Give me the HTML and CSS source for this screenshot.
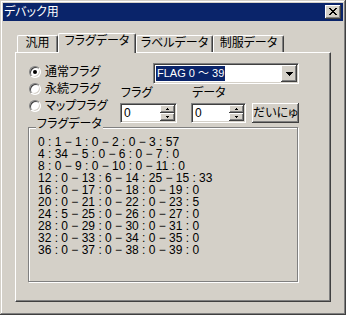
FILE: index.html
```html
<!DOCTYPE html>
<html lang="ja">

<head>
    <meta charset="UTF-8">
    <title>デバック用</title>
    <link rel="stylesheet" href="styles.css">
</head>

<body>

    <div class="window">
        <!-- title bar -->
        <div class="titlebar">
            <span class="title">デバック用</span>
            <button class="close" type="button">
                <svg width="8" height="7" viewBox="0 0 8 7" shape-rendering="crispEdges">
                    <path d="M0 0h2v1h-2zM6 0h2v1h-2zM1 1h2v1h-2zM5 1h2v1h-2zM2 2h4v1h-4zM3 3h2v1h-2zM2 4h4v1h-4zM1 5h2v1h-2zM5 5h2v1h-2zM0 6h2v1h-2zM6 6h2v1h-2z" fill="#000"/>
                </svg>
            </button>
        </div>

        <div class="content">
            <!-- tabs -->
            <div class="tabs">
                <div class="tab tab-general">汎用</div>
                <div class="tab tab-flag active">フラグデータ</div>
                <div class="tab tab-label">ラベルデータ</div>
                <div class="tab tab-uniform">制服データ</div>
            </div>

            <div class="panel">
                <div class="top">
                    <!-- flag type -->
                    <div class="radios">
                        <div class="radio-row"><span class="radio checked"></span>通常フラグ</div>
                        <div class="radio-row"><span class="radio"></span>永続フラグ</div>
                        <div class="radio-row"><span class="radio"></span>マップフラグ</div>
                    </div>

                    <div class="controls">
                        <div class="combo">
                            <span class="combo-text">FLAG 0 〜 39</span>
                            <span class="combo-btn">
                                <svg width="7" height="4" viewBox="0 0 7 4" shape-rendering="crispEdges">
                                    <path d="M0 0h7v1h-7zM1 1h5v1h-5zM2 2h3v1h-3zM3 3h1v1h-1z" fill="#000"/>
                                </svg>
                            </span>
                        </div>

                        <div class="fields">
                            <div class="field field-flag">
                                <div class="field-label">フラグ</div>
                                <div class="spin">
                                    <span class="spin-value">0</span>
                                    <span class="spin-btns">
                                        <span class="spin-btn"><svg width="3" height="2" viewBox="0 0 3 2" shape-rendering="crispEdges"><path d="M1 0h1v1h-1zM0 1h3v1h-3z" fill="#000"/></svg></span>
                                        <span class="spin-btn"><svg width="3" height="2" viewBox="0 0 3 2" shape-rendering="crispEdges"><path d="M0 0h3v1h-3zM1 1h1v1h-1z" fill="#000"/></svg></span>
                                    </span>
                                </div>
                            </div>
                            <div class="field field-data">
                                <div class="field-label">データ</div>
                                <div class="spin">
                                    <span class="spin-value">0</span>
                                    <span class="spin-btns">
                                        <span class="spin-btn"><svg width="3" height="2" viewBox="0 0 3 2" shape-rendering="crispEdges"><path d="M1 0h1v1h-1zM0 1h3v1h-3z" fill="#000"/></svg></span>
                                        <span class="spin-btn"><svg width="3" height="2" viewBox="0 0 3 2" shape-rendering="crispEdges"><path d="M0 0h3v1h-3zM1 1h1v1h-1z" fill="#000"/></svg></span>
                                    </span>
                                </div>
                            </div>
                            <button class="btn" type="button">だいにゅ</button>
                        </div>
                    </div>
                </div>

                <!-- flag values -->
                <div class="group">
                    <span class="group-label">フラグデータ</span>
                    <div class="lines">
                        <div>0 : 1 − 1 : 0 − 2 : 0 − 3 : 57</div>
                        <div>4 : 34 − 5 : 0 − 6 : 0 − 7 : 0</div>
                        <div>8 : 0 − 9 : 0 − 10 : 0 − 11 : 0</div>
                        <div>12 : 0 − 13 : 6 − 14 : 25 − 15 : 33</div>
                        <div>16 : 0 − 17 : 0 − 18 : 0 − 19 : 0</div>
                        <div>20 : 0 − 21 : 0 − 22 : 0 − 23 : 5</div>
                        <div>24 : 5 − 25 : 0 − 26 : 0 − 27 : 0</div>
                        <div>28 : 0 − 29 : 0 − 30 : 0 − 31 : 0</div>
                        <div>32 : 0 − 33 : 0 − 34 : 0 − 35 : 0</div>
                        <div>36 : 0 − 37 : 0 − 38 : 0 − 39 : 0</div>
                    </div>
                </div>
            </div>
        </div>
    </div>

</body>

</html>
```

FILE: styles.css
```css
body {
    margin: 0;
    font-family: "Liberation Sans", "Noto Sans CJK JP", sans-serif;
    font-size: 12px;
    font-feature-settings: "palt" 1;
    color: #000;
}

/* classic window frame */
.window {
    width: 346px;
    height: 315px;
    box-sizing: border-box;
    padding: 3px;
    background: #d4d0c8;
    box-shadow: inset -1px -1px #404040, inset 1px 1px #d4d0c8, inset -2px -2px #808080, inset 2px 2px #fff;
    display: flex;
    flex-direction: column;
}

.titlebar {
    height: 18px;
    background: #0a246a;
    color: #fff;
    display: flex;
    align-items: center;
    justify-content: space-between;
    padding: 0 2px 0 1px;
    line-height: 14px;
}

.close {
    width: 16px;
    height: 14px;
    padding: 0 0 1px;
    border: 0;
    background: #d4d0c8;
    box-shadow: inset -1px -1px #404040, inset 1px 1px #fff, inset -2px -2px #808080;
    display: flex;
    align-items: center;
    justify-content: center;
}

.close svg {
    display: block;
}

.content {
    flex: 1;
    padding: 12px 12px 10px;
    display: flex;
    flex-direction: column;
}

/* tabs */
.tabs {
    display: flex;
    align-items: flex-end;
    height: 20px;
    padding-left: 2px;
    margin-bottom: -1px;
    position: relative;
    z-index: 1;
}

.tab {
    box-sizing: border-box;
    height: 17px;
    margin-bottom: 1px;
    background: #d4d0c8;
    border-top: 1px solid #fff;
    border-left: 1px solid #fff;
    border-right: 1px solid #404040;
    border-radius: 2px 2px 0 0;
    box-shadow: inset -1px 0 #808080;
    text-align: center;
    line-height: 15px;
}

.tab.active {
    height: 20px;
    margin-bottom: 0;
    line-height: 15px;
}

.tab-general { width: 41px; }
.tab-flag { width: 78px; }
.tab-label { width: 77px; }
.tab-uniform { width: 71px; }

.panel {
    flex: 1;
    border: 1px solid;
    border-color: #fff #404040 #404040 #fff;
    box-shadow: inset -1px -1px #808080;
    padding: 10px 0 0 12px;
}

.top {
    display: flex;
}

/* radio buttons */
.radios {
    width: 91px;
    margin-left: 1px;
}

.radio-row {
    height: 17px;
    display: flex;
    align-items: center;
    line-height: 14px;
    white-space: nowrap;
}

.radio {
    width: 12px;
    height: 12px;
    box-sizing: border-box;
    border-radius: 50%;
    border: 1px solid;
    border-color: #808080 #fff #fff #808080;
    background: #fff;
    box-shadow: inset 1px 1px #404040, inset -1px -1px #d4d0c8;
    margin-right: 4px;
    display: flex;
    align-items: center;
    justify-content: center;
}

.radio.checked::after {
    content: "";
    width: 4px;
    height: 4px;
    border-radius: 50%;
    background: #000;
}

.controls {
    width: 179px;
}

/* combo box */
.combo {
    width: 146px;
    height: 21px;
    margin-left: auto;
    box-sizing: border-box;
    background: #fff;
    border: 1px solid;
    border-color: #808080 #fff #fff #808080;
    box-shadow: inset 1px 1px #404040, inset -1px -1px #d4d0c8;
    padding: 2px;
    display: flex;
    justify-content: space-between;
}

.combo-text {
    background: #0a246a;
    color: #fff;
    height: 15px;
    line-height: 15px;
    padding: 0 1px;
    white-space: nowrap;
    font-size: 11px;
}

.combo-btn {
    width: 16px;
    height: 17px;
    margin: -1px -1px 0 0;
    box-sizing: border-box;
    background: #d4d0c8;
    box-shadow: inset -1px -1px #404040, inset 1px 1px #fff, inset -2px -2px #808080;
    display: flex;
    align-items: center;
    justify-content: center;
}

.fields {
    display: flex;
    align-items: flex-end;
    margin-top: 2px;
}

.field-label {
    line-height: 14px;
    height: 14px;
    margin-bottom: 3px;
    padding-left: 1px;
    white-space: nowrap;
}

.field-flag {
    width: 57px;
    margin-right: 14px;
}

.field-data {
    width: 55px;
    margin-right: 6px;
}

/* spin edit */
.spin {
    height: 20px;
    box-sizing: border-box;
    background: #fff;
    border: 1px solid;
    border-color: #808080 #fff #fff #808080;
    box-shadow: inset 1px 1px #404040, inset -1px -1px #d4d0c8;
    padding: 1px;
    display: flex;
    justify-content: space-between;
}

.spin-value {
    line-height: 16px;
    padding-left: 2px;
}

.spin-btns {
    width: 15px;
    display: flex;
    flex-direction: column;
}

.spin-btn {
    flex: 1;
    background: #d4d0c8;
    box-shadow: inset -1px -1px #404040, inset 1px 1px #fff, inset -2px -2px #808080;
    display: flex;
    align-items: center;
    justify-content: center;
}

.spin-btn svg,
.combo-btn svg {
    display: block;
}

.btn {
    width: 47px;
    height: 20px;
    padding: 0;
    border: 0;
    background: #d4d0c8;
    box-shadow: inset -1px -1px #404040, inset 1px 1px #fff, inset -2px -2px #808080;
    font: inherit;
    line-height: 18px;
    color: #000;
    white-space: nowrap;
}

/* etched group box */
.group {
    position: relative;
    width: 270px;
    height: 155px;
    box-sizing: border-box;
    margin-top: 4px;
    border: 1px solid #808080;
    box-shadow: inset 1px 1px #fff, 1px 1px #fff;
    padding: 8px 0 0 9px;
}

.group-label {
    position: absolute;
    top: -10px;
    left: 7px;
    background: #d4d0c8;
    padding: 0 1px;
    line-height: 13px;
}

.lines {
    line-height: 12px;
    white-space: nowrap;
}
```
